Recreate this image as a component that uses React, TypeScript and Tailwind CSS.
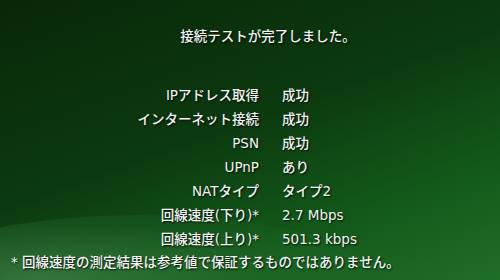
const rows: [string, string][] = [
  ['IPアドレス取得', '成功'],
  ['インターネット接続', '成功'],
  ['PSN', '成功'],
  ['UPnP', 'あり'],
  ['NATタイプ', 'タイプ2'],
  ['回線速度(下り)*', '2.7 Mbps'],
  ['回線速度(上り)*', '501.3 kbps'],
];

export default function App() {
  return (
    <div className="relative w-[500px] h-[280px] overflow-hidden bg-[linear-gradient(160deg,#082808_0%,#0c3a0f_45%,#135a1a_75%,#1f6e28_100%)] text-[#f2f2f2] font-['DejaVu_Sans','Noto_Sans_CJK_JP',sans-serif] font-medium text-[13.5px] [text-shadow:1px_1px_2px_rgba(0,0,0,0.85)]">
      {/* soft wave glow in the lower left */}
      <div className="absolute -left-[120px] top-[215px] w-[520px] h-[160px] rounded-[50%] bg-[radial-gradient(ellipse_at_30%_40%,rgba(120,190,130,0.35),rgba(60,140,70,0.15)_45%,transparent_70%)]" />
      <div className="relative flex flex-col">
        <p className="pt-[24px] leading-[24px] text-center pl-[36px]">接続テストが完了しました。</p>
        <div className="mt-[35px] grid grid-cols-[259px_auto] gap-x-[23px] leading-[24px]">
          {rows.map(([label, value]) => (
            <div key={label} className="contents">
              <span className="text-right">{label}</span>
              <span>{value}</span>
            </div>
          ))}
        </div>
        <p className="pl-[11px] leading-[22px]">* 回線速度の測定結果は参考値で保証するものではありません。</p>
      </div>
    </div>
  );
}
